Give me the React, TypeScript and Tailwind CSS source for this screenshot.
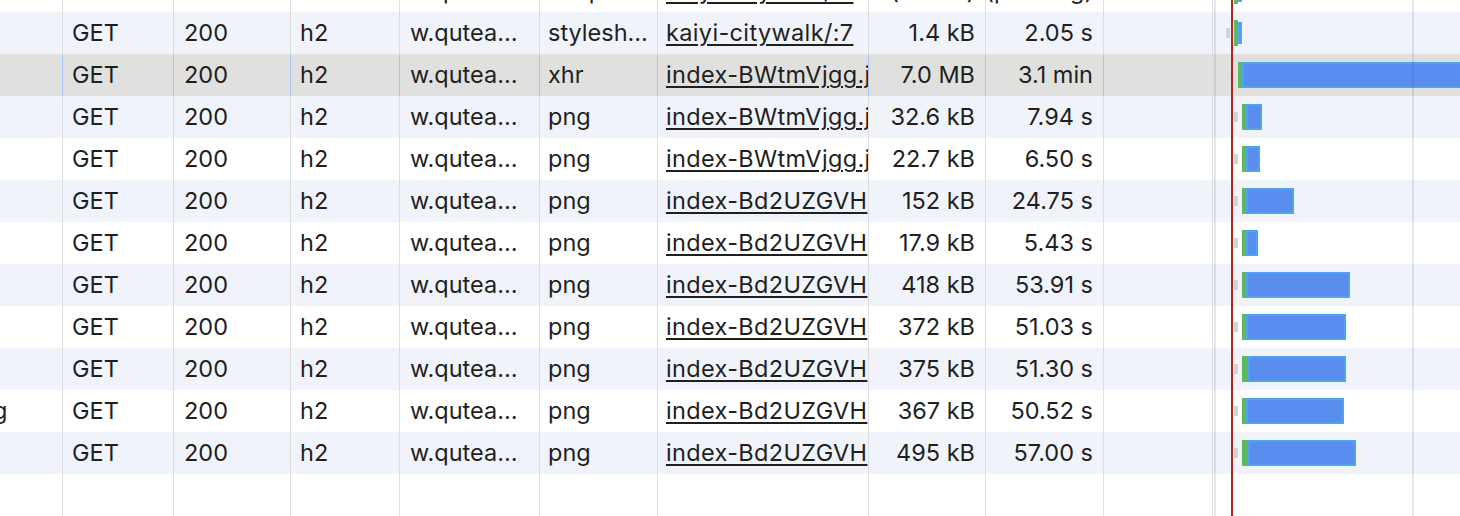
type Bar = { queue: number; green: [number, number]; blue: [number, number] };

type Row = {
  name?: string;
  method: string;
  status: string;
  proto: string;
  domain: string;
  type: string;
  initiator: string;
  size: string;
  time: string;
  bar: Bar;
};

// bar x values are page coords; waterfall column starts at 1213
const WF = 1213;

const ROWS: Row[] = [
  { method: 'GET', status: '200', proto: 'h2', domain: 'w.qutea…', type: 'script', initiator: 'kaiyi-citywalk/:7', size: '(cache)', time: '(pending)', bar: { queue: 1230, green: [1234, 4], blue: [1238, 4] } },
  { method: 'GET', status: '200', proto: 'h2', domain: 'w.qutea…', type: 'stylesh…', initiator: 'kaiyi-citywalk/:7', size: '1.4 kB', time: '2.05 s', bar: { queue: 1226, green: [1234, 4], blue: [1238, 4] } },
  { method: 'GET', status: '200', proto: 'h2', domain: 'w.qutea…', type: 'xhr', initiator: 'index-BWtmVjgg.j', size: '7.0 MB', time: '3.1 min', bar: { queue: 1230, green: [1238, 4], blue: [1242, 240] } },
  { method: 'GET', status: '200', proto: 'h2', domain: 'w.qutea…', type: 'png', initiator: 'index-BWtmVjgg.j', size: '32.6 kB', time: '7.94 s', bar: { queue: 1234, green: [1242, 4], blue: [1246, 16] } },
  { method: 'GET', status: '200', proto: 'h2', domain: 'w.qutea…', type: 'png', initiator: 'index-BWtmVjgg.j', size: '22.7 kB', time: '6.50 s', bar: { queue: 1234, green: [1242, 4], blue: [1246, 14] } },
  { method: 'GET', status: '200', proto: 'h2', domain: 'w.qutea…', type: 'png', initiator: 'index-Bd2UZGVH', size: '152 kB', time: '24.75 s', bar: { queue: 1234, green: [1242, 4], blue: [1246, 48] } },
  { method: 'GET', status: '200', proto: 'h2', domain: 'w.qutea…', type: 'png', initiator: 'index-Bd2UZGVH', size: '17.9 kB', time: '5.43 s', bar: { queue: 1234, green: [1242, 4], blue: [1246, 12] } },
  { method: 'GET', status: '200', proto: 'h2', domain: 'w.qutea…', type: 'png', initiator: 'index-Bd2UZGVH', size: '418 kB', time: '53.91 s', bar: { queue: 1234, green: [1242, 4], blue: [1246, 104] } },
  { method: 'GET', status: '200', proto: 'h2', domain: 'w.qutea…', type: 'png', initiator: 'index-Bd2UZGVH', size: '372 kB', time: '51.03 s', bar: { queue: 1234, green: [1242, 4], blue: [1246, 100] } },
  { method: 'GET', status: '200', proto: 'h2', domain: 'w.qutea…', type: 'png', initiator: 'index-Bd2UZGVH', size: '375 kB', time: '51.30 s', bar: { queue: 1234, green: [1242, 6], blue: [1248, 98] } },
  { name: 'g', method: 'GET', status: '200', proto: 'h2', domain: 'w.qutea…', type: 'png', initiator: 'index-Bd2UZGVH', size: '367 kB', time: '50.52 s', bar: { queue: 1234, green: [1242, 4], blue: [1246, 98] } },
  { method: 'GET', status: '200', proto: 'h2', domain: 'w.qutea…', type: 'png', initiator: 'index-Bd2UZGVH', size: '495 kB', time: '57.00 s', bar: { queue: 1234, green: [1242, 6], blue: [1248, 108] } },
];

function Waterfall({ bar, selected }: { bar: Bar; selected: boolean }) {
  return (
    <div className="relative h-full flex-1 overflow-hidden">
      <div
        className={`absolute top-[16px] h-[10px] w-[4px] bg-[#d3d3d3] ${selected ? 'opacity-40' : ''}`}
        style={{ left: bar.queue - WF }}
      />
      <div className="absolute top-[8px] h-[26px] bg-[#5fb761]" style={{ left: bar.green[0] - WF, width: bar.green[1] }} />
      <div
        className={`absolute border-2 border-[#4ea4ef] bg-[#5b8cef] ${bar.blue[1] <= 4 ? 'top-[10px] h-[22px] border-0 bg-[#4ea4ef]' : 'top-[8px] h-[26px]'}`}
        style={{ left: bar.blue[0] - WF, width: bar.blue[1] }}
      />
    </div>
  );
}

function TableRow({ row, index }: { row: Row; index: number }) {
  const selected = index === 2;
  const bg = selected ? 'bg-[#e0e1de]' : index % 2 === 1 ? 'bg-[#f0f3f9]' : 'bg-white';
  const line = selected ? 'border-[#a9c5f6]' : 'border-[#dedede]';
  const cell = `h-full shrink-0 flex items-center overflow-hidden whitespace-nowrap border-r ${line}`;

  return (
    <div className={`flex h-[42px] shrink-0 ${bg} ${index === 0 ? '-mt-[30px]' : ''}`}>
      <div className={`${cell} w-[63px]`}>
        {row.name && <span className="-ml-[7px]">{row.name}</span>}
      </div>
      <div className={`${cell} w-[111px] pl-[9px]`}>{row.method}</div>
      <div className={`${cell} w-[117px] pl-[10px]`}>{row.status}</div>
      <div className={`${cell} w-[109px] pl-[9px]`}>{row.proto}</div>
      <div className={`${cell} w-[140px] pl-[10px]`}>{row.domain}</div>
      <div className={`${cell} w-[118px] pl-[8px]`}>{row.type}</div>
      <div className={`${cell} w-[211px] pl-[8px]`}>
        <span className="underline underline-offset-[3px] tracking-[0.35px]">{row.initiator}</span>
      </div>
      <div className={`${cell} w-[117px] justify-end pr-[10px]`}>{row.size}</div>
      <div className={`${cell} w-[118px] justify-end pr-[10px]`}>{row.time}</div>
      <div className={`h-full w-[109px] shrink-0 border-r border-[#dedede]`} />
      <Waterfall bar={row.bar} selected={selected} />
    </div>
  );
}

export default function App() {
  const filler = 'h-full shrink-0 border-r border-[#dedede]';
  return (
    <div className="relative flex h-[516px] w-[1460px] flex-col overflow-hidden bg-white font-['Inter',sans-serif] text-[23.5px] text-[#1f1f1f]">
      {ROWS.map((row, i) => (
        <TableRow key={i} row={row} index={i} />
      ))}

      {/* empty space below the last request */}
      <div className="flex flex-1">
        <div className={`${filler} w-[63px]`} />
        <div className={`${filler} w-[111px]`} />
        <div className={`${filler} w-[117px]`} />
        <div className={`${filler} w-[109px]`} />
        <div className={`${filler} w-[140px]`} />
        <div className={`${filler} w-[118px]`} />
        <div className={`${filler} w-[211px]`} />
        <div className={`${filler} w-[117px]`} />
        <div className={`${filler} w-[118px]`} />
        <div className={`${filler} w-[109px]`} />
        <div className="flex-1" />
      </div>

      {/* waterfall grid lines + load marker */}
      <div className="pointer-events-none absolute inset-y-0 left-[1214px] w-[2px] bg-[#1f3f8f]/12" />
      <div className="pointer-events-none absolute inset-y-0 left-[1412px] w-[2px] bg-[#1f3f8f]/12" />
      <div className="pointer-events-none absolute inset-y-0 left-[1231px] w-[2px] bg-[#b0271f]" />
    </div>
  );
}
